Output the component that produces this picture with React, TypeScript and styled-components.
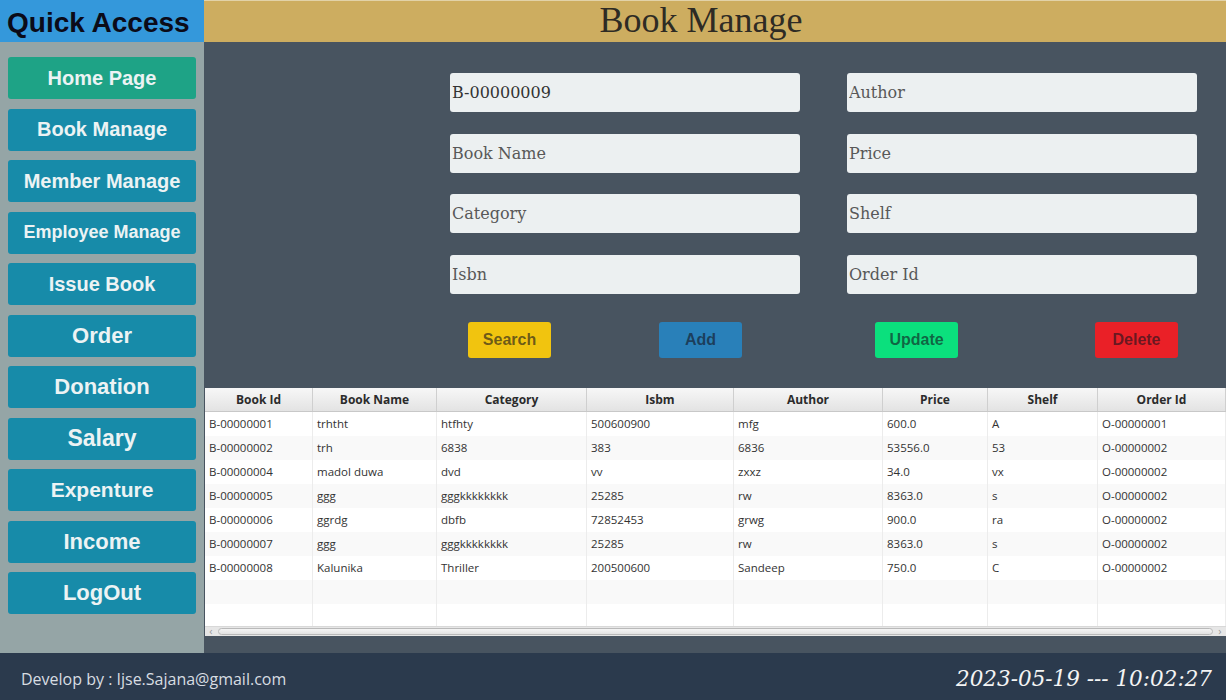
import * as React from 'react';
import styled, { createGlobalStyle } from 'styled-components';

const GlobalStyle = createGlobalStyle`
  html, body {
    margin: 0;
    padding: 0;
    width: 1226px;
    height: 700px;
    overflow: hidden;
  }
  * {
    box-sizing: border-box;
  }
`;

interface Book {
  id: string;
  name: string;
  category: string;
  isbn: string;
  author: string;
  price: string;
  shelf: string;
  orderId: string;
}

const books: Book[] = [
  { id: 'B-00000001', name: 'trhtht', category: 'htfhty', isbn: '500600900', author: 'mfg', price: '600.0', shelf: 'A', orderId: 'O-00000001' },
  { id: 'B-00000002', name: 'trh', category: '6838', isbn: '383', author: '6836', price: '53556.0', shelf: '53', orderId: 'O-00000002' },
  { id: 'B-00000004', name: 'madol duwa', category: 'dvd', isbn: 'vv', author: 'zxxz', price: '34.0', shelf: 'vx', orderId: 'O-00000002' },
  { id: 'B-00000005', name: 'ggg', category: 'gggkkkkkkkk', isbn: '25285', author: 'rw', price: '8363.0', shelf: 's', orderId: 'O-00000002' },
  { id: 'B-00000006', name: 'ggrdg', category: 'dbfb', isbn: '72852453', author: 'grwg', price: '900.0', shelf: 'ra', orderId: 'O-00000002' },
  { id: 'B-00000007', name: 'ggg', category: 'gggkkkkkkkk', isbn: '25285', author: 'rw', price: '8363.0', shelf: 's', orderId: 'O-00000002' },
  { id: 'B-00000008', name: 'Kalunika', category: 'Thriller', isbn: '200500600', author: 'Sandeep', price: '750.0', shelf: 'C', orderId: 'O-00000002' },
];

const columns = ['Book Id', 'Book Name', 'Category', 'Isbm', 'Author', 'Price', 'Shelf', 'Order Id'];
const colTemplate = '108px 124px 150px 147px 149px 105px 110px 128px';

const menu: { label: string; size: number; active?: boolean }[] = [
  { label: 'Home Page', size: 20, active: true },
  { label: 'Book Manage', size: 20 },
  { label: 'Member Manage', size: 20 },
  { label: 'Employee Manage', size: 18 },
  { label: 'Issue Book', size: 20 },
  { label: 'Order', size: 22 },
  { label: 'Donation', size: 22 },
  { label: 'Salary', size: 23 },
  { label: 'Expenture', size: 21 },
  { label: 'Income', size: 22 },
  { label: 'LogOut', size: 22 },
];

const fields = [
  { placeholder: 'Book Id', value: 'B-00000009' },
  { placeholder: 'Author' },
  { placeholder: 'Book Name' },
  { placeholder: 'Price' },
  { placeholder: 'Category' },
  { placeholder: 'Shelf' },
  { placeholder: 'Isbn' },
  { placeholder: 'Order Id' },
];

const actions = [
  { label: 'Search', color: '#f1c40f' },
  { label: 'Add', color: '#2980b9' },
  { label: 'Update', color: '#0be07d' },
  { label: 'Delete', color: '#ea2027' },
];

function App() {
  return (
    <>
      <GlobalStyle />
      <Window>
        <Sidebar>
          <SideTitle>Quick Access</SideTitle>
          <Menu>
            {menu.map((m) => (
              <MenuButton key={m.label} $size={m.size} $active={m.active}>
                {m.label}
              </MenuButton>
            ))}
          </Menu>
        </Sidebar>
        <Main>
          <TopBar>Book Manage</TopBar>
          <Form>
            {fields.map((f) => (
              <Field key={f.placeholder} placeholder={f.placeholder} defaultValue={f.value} />
            ))}
          </Form>
          <Actions>
            {actions.map((a) => (
              <ActionButton key={a.label} $color={a.color}>
                {a.label}
              </ActionButton>
            ))}
          </Actions>
          <Table>
            <HeaderRow>
              {columns.map((c) => (
                <HeadCell key={c}>{c}</HeadCell>
              ))}
            </HeaderRow>
            {books.map((b, i) => (
              <Row key={b.id} $odd={i % 2 === 1}>
                <Cell>{b.id}</Cell>
                <Cell>{b.name}</Cell>
                <Cell>{b.category}</Cell>
                <Cell>{b.isbn}</Cell>
                <Cell>{b.author}</Cell>
                <Cell>{b.price}</Cell>
                <Cell>{b.shelf}</Cell>
                <Cell>{b.orderId}</Cell>
              </Row>
            ))}
            {[0, 1].map((r) => (
              <Row key={'empty' + r} $odd={r === 0} $short={r === 1}>
                {columns.map((c) => (
                  <Cell key={c} />
                ))}
              </Row>
            ))}
            <ScrollBar>
              <Arrow>‹</Arrow>
              <Thumb />
              <Arrow>›</Arrow>
            </ScrollBar>
          </Table>
        </Main>
        <Footer>
          <Credit>Develop by : Ijse.Sajana@gmail.com</Credit>
          <Clock>2023-05-19 --- 10:02:27</Clock>
        </Footer>
      </Window>
    </>
  );
}

const Window = styled.div`
  width: 1226px;
  height: 700px;
  display: grid;
  grid-template-columns: 204px 1fr;
  grid-template-rows: 653px 47px;
  background: #485460;
`;

const Sidebar = styled.aside`
  background: #95a5a6;
  display: flex;
  flex-direction: column;
`;

const SideTitle = styled.div`
  height: 42px;
  background: #3498db;
  color: #0b0b18;
  font-family: 'Liberation Sans', Arial, sans-serif;
  font-weight: bold;
  font-size: 28px;
  line-height: 45px;
  padding-left: 7px;
  white-space: nowrap;
`;

const Menu = styled.nav`
  display: flex;
  flex-direction: column;
  gap: 9.5px;
  padding: 15px 8px 0 8px;
`;

const MenuButton = styled.div<{ $size: number; $active?: boolean }>`
  height: 42px;
  border-radius: 3px;
  background: ${({ $active }) => ($active ? '#1ea386' : '#178ba9')};
  color: #ecf3f4;
  font-family: 'Liberation Sans', Arial, sans-serif;
  font-weight: bold;
  font-size: ${({ $size }) => $size}px;
  display: flex;
  align-items: center;
  justify-content: center;
  white-space: nowrap;
`;

const Main = styled.main`
  display: flex;
  flex-direction: column;
  min-width: 0;
`;

const TopBar = styled.header`
  height: 42px;
  background: #cdad60;
  border-top: 1px solid #e2d2a8;
  color: #2e2b24;
  font-family: 'Liberation Serif', 'Times New Roman', serif;
  font-size: 36px;
  line-height: 38px;
  text-align: center;
  padding-right: 28px;
`;

const Form = styled.div`
  display: grid;
  grid-template-columns: 350px 350px;
  grid-template-rows: repeat(4, 39px);
  column-gap: 47px;
  row-gap: 21.5px;
  padding: 31px 0 0 246px;
`;

const Field = styled.input`
  height: 39px;
  border: none;
  border-radius: 3px;
  background: #ecf0f1;
  padding: 0 2px;
  font-family: 'DejaVu Serif', 'Liberation Serif', serif;
  font-size: 16px;
  color: #333;
  outline: none;
  &::placeholder {
    color: #585858;
  }
`;

const Actions = styled.div`
  display: grid;
  grid-template-columns: 191px 216px 220px 83px;
  padding: 28px 0 0 264px;
`;

const ActionButton = styled.div<{ $color: string }>`
  width: 83px;
  height: 36px;
  border-radius: 3px;
  background: ${({ $color }) => $color};
  color: rgba(20, 20, 30, 0.62);
  font-family: 'Liberation Sans', Arial, sans-serif;
  font-weight: bold;
  font-size: 16px;
  display: flex;
  align-items: center;
  justify-content: center;
`;

const Table = styled.div`
  margin: 30px 0 0 1px;
  background: #fff;
  font-family: 'Open Sans', 'Noto Sans', sans-serif;
  font-size: 11.5px;
  color: #333;
`;

const HeaderRow = styled.div`
  display: grid;
  grid-template-columns: ${colTemplate};
  height: 24px;
  background: linear-gradient(#f7f7f7, #e3e3e3);
  border-bottom: 1px solid #c8c8c8;
`;

const HeadCell = styled.div`
  border-right: 1px solid #cfcfcf;
  font-weight: bold;
  font-size: 12px;
  text-align: center;
  line-height: 23px;
  color: #2b2b2b;
`;

const Row = styled.div<{ $odd?: boolean; $short?: boolean }>`
  display: grid;
  grid-template-columns: ${colTemplate};
  height: ${({ $short }) => ($short ? 22 : 24)}px;
  background: ${({ $odd }) => ($odd ? '#f9f9f9' : '#fff')};
`;

const Cell = styled.div`
  border-right: 1px solid #ececec;
  padding-left: 4px;
  line-height: 24px;
  white-space: nowrap;
  overflow: hidden;
`;

const ScrollBar = styled.div`
  height: 10px;
  background: #e6e6e6;
  border-top: 1px solid #d8d8d8;
  display: flex;
  align-items: center;
  gap: 3px;
  padding: 0 2px;
`;

const Arrow = styled.span`
  width: 8px;
  font-size: 11px;
  line-height: 8px;
  color: #9a9a9a;
  text-align: center;
`;

const Thumb = styled.div`
  flex: 1;
  height: 7px;
  border-radius: 4px;
  border: 1px solid #b9b9b9;
  background: linear-gradient(#f4f4f4, #e2e2e2);
`;

const Footer = styled.footer`
  grid-column: 1 / span 2;
  background: #2b3a4d;
  display: flex;
  align-items: center;
  justify-content: space-between;
  padding: 4px 14px 0 21px;
`;

const Credit = styled.span`
  font-family: 'Open Sans', 'Noto Sans', sans-serif;
  font-size: 16px;
  color: #d8dde2;
`;

const Clock = styled.span`
  font-family: 'DejaVu Serif', 'Liberation Serif', serif;
  font-style: italic;
  font-size: 21.5px;
  color: #f4f4f4;
`;

export default App;
